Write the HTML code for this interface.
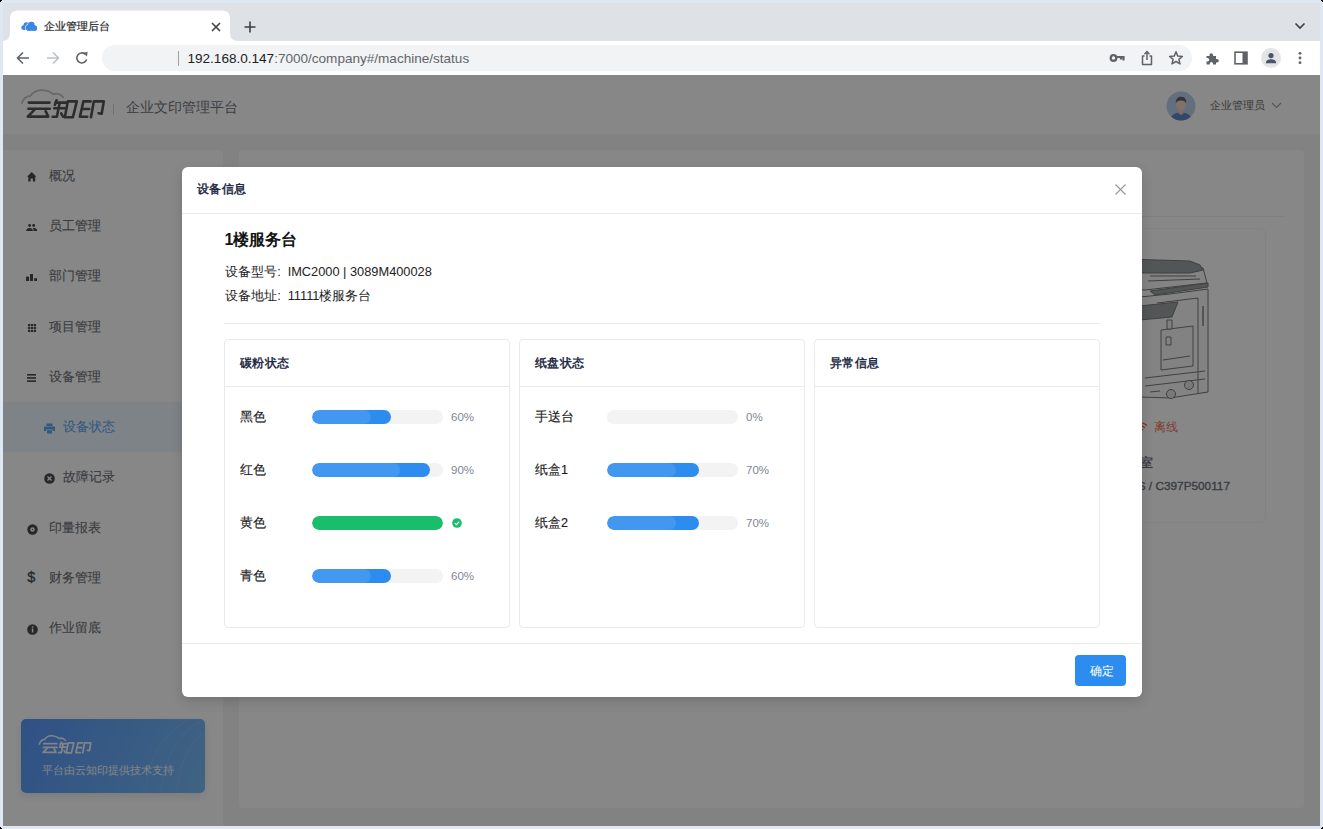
<!DOCTYPE html>
<html><head><meta charset="utf-8">
<style>
*{box-sizing:border-box;margin:0;padding:0}
html,body{width:1323px;height:829px;overflow:hidden}
body{background:#dde8f4;font-family:"Liberation Sans",sans-serif;position:relative}
.a{position:absolute}
.win{left:3px;top:3px;width:1317px;height:823px;background:#838383;overflow:hidden}
.tabbar{left:0;top:0;width:1317px;height:38px;background:#dee1e6}
.toolbar{left:0;top:38px;width:1317px;height:34px;background:#fff}
.omni{left:99px;top:4px;width:1090px;height:26px;background:#f1f3f4;border-radius:13px}
.t{white-space:nowrap;line-height:1}
/* page */
.page{left:0;top:72px;width:1317px;height:751px;background:#f2f2f2}
.hdr{left:0;top:0;width:1317px;height:59px;background:#fff}
.side{left:0;top:75px;width:220px;height:676px;background:#fff;border-top-right-radius:4px}
.main{left:236px;top:75px;width:1065px;height:658px;background:#fff;border-radius:4px}
.mask{left:0;top:0;width:1317px;height:751px;background:rgba(55,55,55,.6)}
.menu{left:0;width:220px;height:50.25px;color:#3a3f4a;font-size:12.6px}
.menu .tx{position:absolute;top:19px;-webkit-text-stroke:.12px currentColor}
.modal{left:179px;top:164px;width:960px;height:530px;background:#fff;border-radius:6px;box-shadow:0 4px 12px rgba(0,0,0,.15)}
.card{top:172px;width:286px;height:289px;border:1px solid #e8eaec;border-radius:4px;background:#fff}
.card .hd{position:absolute;left:0;top:0;width:284px;height:47px;border-bottom:1px solid #e8eaec}
.card .ht{position:absolute;left:15px;top:15.8px;font-size:13px;font-weight:normal;color:#17233d;-webkit-text-stroke:.45px #17233d;transform:scale(.955);transform-origin:0 0}
.row{position:absolute;left:0;width:284px;height:20px;margin-top:-1px}
.row .lb{position:absolute;left:15px;top:4px;font-size:12.6px;color:#1c1c1c;-webkit-text-stroke:.15px currentColor}
.trk{position:absolute;left:87px;top:3px;width:131px;height:14px;border-radius:7px;background:#f3f3f3;overflow:hidden}
.fill{position:absolute;left:0;top:0;height:14px;border-radius:7px;background:#2d8cf0}
.fill i{position:absolute;left:0;top:0;height:14px;border-radius:7px;background:rgba(255,255,255,.1)}
.pc{position:absolute;left:226px;top:4.5px;font-size:11.5px;color:#808695}
</style></head><body>
<div class="a win">
  <!-- tab bar -->
  <div class="a tabbar">
    <svg class="a" style="left:0;top:0" width="240" height="38" viewBox="0 0 240 38">
      <path d="M-1 38 Q7 38 7 30 L7 15.5 Q7 7.5 15 7.5 L219 7.5 Q227 7.5 227 15.5 L227 30 Q227 38 235 38 Z" fill="#fff"/>
    </svg>
    <svg class="a" style="left:15px;top:15px" width="22" height="16" viewBox="0 0 22 16">
      <g fill="#3b86e4"><circle cx="5.6" cy="9.6" r="2.3"/><circle cx="8.4" cy="7.2" r="2.9"/><rect x="5.5" y="8.5" width="5" height="3.4" rx="1"/></g>
      <g fill="#3b86e4" stroke="#fff" stroke-width="1.1"><circle cx="10.6" cy="9.7" r="3"/><circle cx="13.3" cy="7" r="3.3"/><circle cx="16.4" cy="10" r="2.7"/><rect x="9" y="9.4" width="9.8" height="3.3" rx="1.6"/></g>
      <g fill="#3b86e4"><circle cx="10.6" cy="9.7" r="3"/><circle cx="13.3" cy="7" r="3.3"/><circle cx="16.4" cy="10" r="2.7"/><rect x="9" y="9.4" width="9.8" height="3.3" rx="1.6"/></g>
    </svg>
    <div class="a t" style="left:41px;top:17.5px;font-size:11px;color:#2a2b2e;-webkit-text-stroke:.2px #2a2b2e">企业管理后台</div>
    <svg class="a" style="left:207px;top:18px" width="12" height="12" viewBox="0 0 12 12"><path d="M2 2 L10 10 M10 2 L2 10" stroke="#3c4043" stroke-width="1.6"/></svg>
    <svg class="a" style="left:240px;top:17px" width="14" height="14" viewBox="0 0 14 14"><path d="M7 1.5 V12.5 M1.5 7 H12.5" stroke="#3c4043" stroke-width="1.6"/></svg>
    <svg class="a" style="left:1291px;top:19px" width="12" height="8" viewBox="0 0 12 8"><path d="M1.5 1.5 L6 6 L10.5 1.5" stroke="#3c4043" stroke-width="1.6" fill="none"/></svg>
  </div>
  <!-- toolbar -->
  <div class="a toolbar">
    <svg class="a" style="left:12px;top:9px" width="16" height="16" viewBox="0 0 16 16"><path d="M14 8 H3 M8 2.5 L2.5 8 L8 13.5" stroke="#5f6368" stroke-width="1.6" fill="none"/></svg>
    <svg class="a" style="left:42px;top:9px" width="16" height="16" viewBox="0 0 16 16"><path d="M2 8 H13 M8 2.5 L13.5 8 L8 13.5" stroke="#bdc1c6" stroke-width="1.6" fill="none"/></svg>
    <svg class="a" style="left:71px;top:9px" width="16" height="16" viewBox="0 0 16 16"><path d="M12.6 9.5 A5 5 0 1 1 11.2 4.2" stroke="#5f6368" stroke-width="1.6" fill="none"/><path d="M9 3 L13.6 1.8 L13 6.6 Z" fill="#5f6368"/></svg>
    <div class="a omni">
      <div class="a" style="left:76px;top:6px;width:1px;height:15px;background:#9aa0a6"></div>
      <div class="a t" style="left:85.5px;top:7px;font-size:13.55px;color:#62666a"><span style="color:#202124">192.168.0.147</span>:7000/company#/machine/status</div>
      <!-- key -->
      <svg class="a" style="left:1007px;top:6px" width="16" height="14" viewBox="0 0 16 14"><circle cx="4.5" cy="7" r="2.8" stroke="#5f6368" stroke-width="2.2" fill="none"/><path d="M7 6 H14.5 V9.5 M12 6 V8.5" stroke="#5f6368" stroke-width="2.2" fill="none"/></svg>
      <!-- share -->
      <svg class="a" style="left:1038px;top:5px" width="14" height="16" viewBox="0 0 14 16"><path d="M4.5 6 H2.5 V14.5 H11.5 V6 H9.5" stroke="#5f6368" stroke-width="1.5" fill="none" stroke-linejoin="round"/><path d="M7 10 V1.8 M4.5 4.2 L7 1.5 L9.5 4.2" stroke="#5f6368" stroke-width="1.5" fill="none"/></svg>
      <!-- star -->
      <svg class="a" style="left:1066px;top:5px" width="16" height="16" viewBox="0 0 16 16"><path d="M8 1.8 L9.8 6.1 L14.4 6.4 L10.9 9.4 L12 13.9 L8 11.5 L4 13.9 L5.1 9.4 L1.6 6.4 L6.2 6.1 Z" stroke="#5f6368" stroke-width="1.5" fill="none" stroke-linejoin="round"/></svg>
    </div>
    <!-- puzzle -->
    <svg class="a" style="left:1202px;top:10px" width="15" height="15" viewBox="0 0 15 15"><path d="M1.5 5 H4.5 V4 A1.8 1.8 0 0 1 8.1 4 V5 H11 V8 H12 A1.8 1.8 0 0 1 12 11.6 H11 V13.5 H8 V12.5 A1.6 1.6 0 0 0 4.8 12.5 V13.5 H1.5 V10.5 H2.5 A1.7 1.7 0 0 0 2.5 7.1 H1.5 Z" fill="#5f6368"/></svg>
    <!-- side panel -->
    <svg class="a" style="left:1231px;top:10px" width="14" height="14" viewBox="0 0 14 14"><rect x="1" y="1.2" width="12" height="11.6" stroke="#5f6368" stroke-width="1.6" fill="none"/><rect x="8.5" y="1" width="4.5" height="12" fill="#5f6368"/></svg>
    <!-- profile -->
    <div class="a" style="left:1258px;top:7px;width:20px;height:20px;border-radius:10px;background:#e2e4e7"></div>
    <svg class="a" style="left:1258px;top:7px" width="20" height="20" viewBox="0 0 20 20"><circle cx="10" cy="7.6" r="2.6" fill="#4a5468"/><path d="M4.8 15.2 C5 12.2 7.4 11.3 10 11.3 C12.6 11.3 15 12.2 15.2 15.2 Z" fill="#4a5468"/></svg>
    <svg class="a" style="left:1294px;top:10px" width="6" height="14" viewBox="0 0 6 14"><circle cx="3" cy="2.3" r="1.4" fill="#5f6368"/><circle cx="3" cy="7" r="1.4" fill="#5f6368"/><circle cx="3" cy="11.7" r="1.4" fill="#5f6368"/></svg>
  </div>

  <!-- page -->
  <div class="a page">
    <div class="a hdr">
      <svg class="a" style="left:15px;top:9px" width="92" height="40" viewBox="0 0 92 40">
        <path d="M3.8 19 C5.5 14.5 8.5 12 12.5 11.8 C15 7.5 21 5.5 26.4 6.3 C30.5 6.8 33.5 8.5 35 10.2 C39 9 43 10.5 45.2 13.2" stroke="#b0b0b0" stroke-width="1.8" fill="none" stroke-linecap="round"/>
        <g stroke="#1e1e1e" stroke-width="2.6" fill="none" stroke-linecap="round" stroke-linejoin="round">
          <path d="M10.8 18.6 H31.5 M10.4 24.7 H31.8 M17.5 24.7 L9.8 32.6 H30.2 M27.6 27.2 L30.2 32.4"/>
          <path d="M38.6 16.3 L36.9 20.9 M37.4 18.6 H48 M36.2 24.3 H46.6 M41.7 18.6 L38.9 32.7 H34.6 M43.2 29.4 L45 32.6"/>
          <path d="M49.8 17.4 H58.8 L54.9 33.2 H46.8 Z"/>
          <path d="M72.6 17.4 H65.4 L61.9 32.7 H69.2 M63.6 25 H71.2"/>
          <path d="M73 33.2 L75.8 17.4 H85.8 L83.7 29.8 L80.5 29.2"/>
        </g>
      </svg>
      <div class="a" style="left:110px;top:29px;width:1px;height:11px;background:#c8c8c8"></div>
      <div class="a t" style="left:122.5px;top:26px;font-size:13.7px;color:#3f4654">企业文印管理平台</div>
      <svg class="a" style="left:1163px;top:16px" width="30" height="30" viewBox="0 0 30 30">
        <clipPath id="cc"><circle cx="15" cy="15" r="14.5"/></clipPath>
        <circle cx="15" cy="15" r="14.5" fill="#a9c3e8"/>
        <g clip-path="url(#cc)">
          <path d="M4 31 C4 24 9 21.5 15 21.5 C21 21.5 26 24 26 31 Z" fill="#2f5fb3"/>
          <path d="M12.5 18 H17.5 V22.5 L15 24 L12.5 22.5 Z" fill="#e8b9a0"/>
          <ellipse cx="15" cy="13.5" rx="5" ry="6" fill="#f0c7ac"/>
          <path d="M9.8 12.5 C9.5 7 13 5.5 15.5 5.8 C19 6 20.8 8.5 20.2 12.5 C19.5 10.5 18 9.5 15 9.5 C12 9.5 10.5 10.5 9.8 12.5 Z" fill="#2b2f4a"/>
        </g>
      </svg>
      <div class="a t" style="left:1207px;top:24.5px;font-size:11.2px;color:#333">企业管理员</div>
      <svg class="a" style="left:1268px;top:27px" width="11" height="7" viewBox="0 0 11 7"><path d="M1 1 L5.5 5.5 L10 1" stroke="#808695" stroke-width="1.1" fill="none"/></svg>
    </div>

    <div class="a side">
      <div class="a menu" style="top:0.9px"><svg class="a" style="left:23.8px;top:21.3px" width="9.5" height="9.6" viewBox="0 0 9.5 9.6"><path d="M4.75 0 L9.5 4.8 H8.2 V9.6 H5.9 V6.6 H3.6 V9.6 H1.3 V4.8 H0 Z" fill="#0d0f14"/></svg><span class="tx t" style="left:46px">概况</span></div>
      <div class="a menu" style="top:51.15px"><svg class="a" style="left:22.9px;top:22.5px" width="11.3" height="7.4" viewBox="0 0 11.3 7.4"><g fill="#0d0f14"><circle cx="3.6" cy="1.5" r="1.45"/><circle cx="7.7" cy="1.5" r="1.45"/><path d="M0 7.4 C0 5.2 1.6 4.1 3.6 4.1 C5.6 4.1 7 5.2 7 7.4 Z"/><path d="M7.6 7.4 C7.6 5.9 7.3 5 6.9 4.5 C7.2 4.2 7.6 4.1 7.9 4.1 C9.8 4.1 11.3 5.2 11.3 7.4 Z"/></g></svg><span class="tx t" style="left:46px">员工管理</span></div>
      <div class="a menu" style="top:101.4px"><svg class="a" style="left:22.8px;top:23px" width="11.3" height="7.1" viewBox="0 0 11.3 7.1"><g fill="#0d0f14"><rect x="0" y="2.6" width="3" height="4.5"/><rect x="4" y="0" width="3" height="7.1"/><rect x="8.2" y="4.2" width="3.1" height="2.9"/></g></svg><span class="tx t" style="left:46px">部门管理</span></div>
      <div class="a menu" style="top:151.65px"><svg class="a" style="left:24.7px;top:21.9px" width="8.3" height="8.3" viewBox="0 0 8.3 8.3"><g fill="#0d0f14"><rect x="0" y="0" width="2.3" height="2.3"/><rect x="3" y="0" width="2.3" height="2.3"/><rect x="6" y="0" width="2.3" height="2.3"/><rect x="0" y="3" width="2.3" height="2.3"/><rect x="3" y="3" width="2.3" height="2.3"/><rect x="6" y="3" width="2.3" height="2.3"/><rect x="0" y="6" width="2.3" height="2.3"/><rect x="3" y="6" width="2.3" height="2.3"/><rect x="6" y="6" width="2.3" height="2.3"/></g></svg><span class="tx t" style="left:46px">项目管理</span></div>
      <div class="a menu" style="top:201.9px"><svg class="a" style="left:23.6px;top:22.5px" width="9.9" height="7.9" viewBox="0 0 9.9 7.9"><g fill="#0d0f14"><rect x="0" y="0" width="9.9" height="1.6"/><rect x="0" y="3.15" width="9.9" height="1.6"/><rect x="0" y="6.3" width="9.9" height="1.6"/></g></svg><span class="tx t" style="left:46px">设备管理</span></div>
      <div class="a menu" style="top:252.15px;background:#e8f4ff;color:#2d8cf0"><svg class="a" style="left:40.5px;top:21px" width="11" height="11" viewBox="0 0 11 11"><path d="M2.5 0.5 H8.5 V3 H2.5 Z M0.5 3.5 H10.5 A0.5 0.5 0 0 1 11 4 V8 H8.8 V6.5 H2.2 V8 H0 V4 A0.5 0.5 0 0 1 .5 3.5 Z M3 7.2 H8 V10.5 H3 Z" fill="#2d8cf0"/></svg><span class="tx t" style="left:60px">设备状态</span></div>
      <div class="a menu" style="top:302.4px"><svg class="a" style="left:40.5px;top:21px" width="11" height="11" viewBox="0 0 11 11"><circle cx="5.5" cy="5.5" r="5.3" fill="#0d0f14"/><path d="M3.5 3.5 L7.5 7.5 M7.5 3.5 L3.5 7.5" stroke="#fff" stroke-width="1.4"/></svg><span class="tx t" style="left:60px">故障记录</span></div>
      <div class="a menu" style="top:352.65px"><svg class="a" style="left:23.5px;top:21px" width="11" height="11" viewBox="0 0 11 11"><circle cx="5.5" cy="5.5" r="5.2" fill="#0d0f14"/><circle cx="5.5" cy="5.5" r="2.2" fill="#fff"/><circle cx="5.5" cy="5.5" r=".7" fill="#0d0f14"/></svg><span class="tx t" style="left:46px">印量报表</span></div>
      <div class="a menu" style="top:402.9px"><div class="a t" style="left:24.2px;top:17.6px;font-size:14.5px;color:#0d0f14;-webkit-text-stroke:.35px #0d0f14">$</div><span class="tx t" style="left:46px">财务管理</span></div>
      <div class="a menu" style="top:453.15px"><svg class="a" style="left:23.5px;top:20.5px" width="11" height="11" viewBox="0 0 11 11"><circle cx="5.5" cy="5.5" r="5.3" fill="#0d0f14"/><rect x="4.8" y="4.5" width="1.5" height="4" fill="#fff"/><rect x="4.8" y="2.3" width="1.5" height="1.4" fill="#fff"/></svg><span class="tx t" style="left:46px">作业留底</span></div>
      <div class="a" style="left:18px;top:569px;width:184px;height:74px;border-radius:5px;background:linear-gradient(115deg,#2478fa,#4da6f5);overflow:hidden;box-shadow:0 3px 8px rgba(0,0,0,.12)">
        <svg class="a" style="left:110px;top:0" width="74" height="74" viewBox="0 0 74 74"><path d="M30 80 C30 40 50 10 74 0 M46 80 C46 45 60 20 80 10 M14 80 C14 35 40 5 70 -5" stroke="#fff" stroke-opacity=".12" fill="none"/></svg>
        <svg class="a" style="left:15.6px;top:12.7px" width="57.7" height="25.1" viewBox="0 0 92 40">
        <path d="M3.8 19 C5.5 14.5 8.5 12 12.5 11.8 C15 7.5 21 5.5 26.4 6.3 C30.5 6.8 33.5 8.5 35 10.2 C39 9 43 10.5 45.2 13.2" stroke="#e6eefb" stroke-width="2.6" fill="none" stroke-linecap="round"/>
        <g stroke="#f2f6fd" stroke-width="2.8" fill="none" stroke-linecap="round" stroke-linejoin="round">
          <path d="M10.8 18.6 H31.5 M10.4 24.7 H31.8 M17.5 24.7 L9.8 32.6 H30.2 M27.6 27.2 L30.2 32.4"/>
          <path d="M38.6 16.3 L36.9 20.9 M37.4 18.6 H48 M36.2 24.3 H46.6 M41.7 18.6 L38.9 32.7 H34.6 M43.2 29.4 L45 32.6"/>
          <path d="M49.8 17.4 H58.8 L54.9 33.2 H46.8 Z"/>
          <path d="M72.6 17.4 H65.4 L61.9 32.7 H69.2 M63.6 25 H71.2"/>
          <path d="M73 33.2 L75.8 17.4 H85.8 L83.7 29.8 L80.5 29.2"/>
        </g>
      </svg>
        <div class="a t" style="left:21px;top:46px;font-size:10.9px;color:#f4f8ff">平台由云知印提供技术支持</div>
      </div>
    </div>

    <div class="a main">
      <div class="a" style="left:18px;top:66px;width:1028px;height:1px;background:#e8eaec"></div>
      <div class="a" style="left:800px;top:78px;width:227px;height:295px;border:1px solid #f1f2f4;border-radius:6px"></div>
      <svg class="a" style="left:861px;top:105px" width="115" height="150" viewBox="1100 255 115 150">
        <g stroke="#4e4e4e" stroke-width="1" stroke-linejoin="round">
          <path d="M1110 300 L1170 294 L1208 289 L1208 392 L1170 398 L1110 396 Z" fill="#f6f6f6"/>
          <path d="M1157 303 L1198 298 L1198 394" fill="none"/>
          <path d="M1161 330 L1193 326 L1193 366 L1161 370 Z" fill="#f2f2f2"/>
          <path d="M1167 320 H1172 V329 H1167 Z" fill="#eee"/>
          <path d="M1145 378 L1205 371 M1145 386 L1205 379 M1150 392 L1160 391" fill="none"/><path d="M1163 360 L1190 356" fill="none"/><path d="M1166 337 H1171 V345 H1166 Z" fill="none"/>
          <path d="M1120 270 L1203 268 L1207 283 L1145 290 L1120 288 Z" fill="#f4f4f4"/>
          <path d="M1125 259 L1190 261 L1200 265 L1203 270 L1190 273 L1130 273 Z" fill="#7b8488"/>
          <path d="M1150 291 L1208 283 L1208 287 L1155 295 Z" fill="#7b8488"/>
          <path d="M1120 308 L1178 302 L1172 317 L1118 322 Z" fill="#7b8488"/>
          <path d="M1150 276 H1196 M1148 281 L1200 279" fill="none"/>
          <path d="M1203 306 V326" stroke-width="1.4" fill="none"/>
          <circle cx="1171" cy="394" r="4.5" fill="#ddd"/>
          <circle cx="1189" cy="385" r="4.5" fill="#ddd"/>
        </g>
      </svg>
      <svg class="a" style="left:895px;top:271px" width="14" height="12" viewBox="0 0 14 12"><path d="M1 4.5 C4.5 1 9.5 1 13 4.5 M3 6.8 C5.5 4.5 8.5 4.5 11 6.8 M5 9 C6.2 8 7.8 8 9 9" stroke="#ed4014" stroke-width="1.5" fill="none"/></svg>
      <div class="a t" style="left:915px;top:272px;font-size:11.8px;color:#ed4014">离线</div>
      <div class="a t" style="left:875px;top:306.5px;font-size:12.6px;color:#2a3040;-webkit-text-stroke:.3px #2a3040">会议室</div>
      <div class="a t" style="right:74px;top:330.6px;font-size:11.8px;font-weight:normal;color:#3d4452;-webkit-text-stroke:.35px #3d4452">IMC2000S / C397P500117</div>
    </div>

    <div class="a mask"></div>
  </div>

  <!-- modal -->
  <div class="a modal">
    <div class="a t" style="left:14.5px;top:15.3px;font-size:13px;font-weight:normal;color:#17233d;-webkit-text-stroke:.45px #17233d;transform:scale(.955);transform-origin:0 0">设备信息</div>
    <svg class="a" style="left:932px;top:16px" width="13" height="13" viewBox="0 0 13 13"><path d="M1.5 1.5 L11.5 11.5 M11.5 1.5 L1.5 11.5" stroke="#999" stroke-width="1.1"/></svg>
    <div class="a" style="left:0;top:45.5px;width:960px;height:1px;background:#e8eaec"></div>
    <div class="a t" style="left:42.5px;top:65px;font-size:16px;font-weight:bold;color:#141414">1楼服务台</div>
    <div class="a t" style="left:42.5px;top:99px;font-size:12.8px;color:#222">设备型号<span style="margin:0 6.9px 0 0.7px">:</span>IMC2000 | 3089M400028</div>
    <div class="a t" style="left:42.5px;top:123px;font-size:12.8px;color:#222">设备地址<span style="margin:0 6.9px 0 0.7px">:</span>11111楼服务台</div>
    <div class="a" style="left:42px;top:156px;width:876px;height:1px;background:#e8eaec"></div>

    <div class="a card" style="left:42px">
      <div class="hd"><span class="ht t">碳粉状态</span></div>
      <div class="row" style="top:68px"><span class="lb t">黑色</span><div class="trk"><div class="fill" style="width:60%"><i style="width:75%"></i></div></div><span class="pc t">60%</span></div>
      <div class="row" style="top:121px"><span class="lb t">红色</span><div class="trk"><div class="fill" style="width:90%"><i style="width:75%"></i></div></div><span class="pc t">90%</span></div>
      <div class="row" style="top:174px"><span class="lb t">黄色</span><div class="trk"><div class="fill" style="width:100%;background:#19be6b"></div></div>
        <svg class="a" style="left:227px;top:5px" width="10" height="10" viewBox="0 0 10 10"><circle cx="5" cy="5" r="4.8" fill="#19be6b"/><path d="M2.8 5.2 L4.4 6.7 L7.3 3.6" stroke="#fff" stroke-width="1.1" fill="none"/></svg></div>
      <div class="row" style="top:227px"><span class="lb t">青色</span><div class="trk"><div class="fill" style="width:60%"><i style="width:75%"></i></div></div><span class="pc t">60%</span></div>
    </div>
    <div class="a card" style="left:337px">
      <div class="hd"><span class="ht t">纸盘状态</span></div>
      <div class="row" style="top:68px"><span class="lb t">手送台</span><div class="trk"></div><span class="pc t">0%</span></div>
      <div class="row" style="top:121px"><span class="lb t">纸盒1</span><div class="trk"><div class="fill" style="width:70%"><i style="width:75%"></i></div></div><span class="pc t">70%</span></div>
      <div class="row" style="top:174px"><span class="lb t">纸盒2</span><div class="trk"><div class="fill" style="width:70%"><i style="width:75%"></i></div></div><span class="pc t">70%</span></div>
    </div>
    <div class="a card" style="left:632px">
      <div class="hd"><span class="ht t">异常信息</span></div>
    </div>

    <div class="a" style="left:0;top:476px;width:960px;height:1px;background:#e8eaec"></div>
    <div class="a" style="left:892.5px;top:488px;width:51.5px;height:30.5px;border-radius:4px;background:#2d8cf0"></div>
    <div class="a t" style="left:907.5px;top:498.5px;font-size:11.5px;color:#fff">确定</div>
  </div>
</div>
<div class="a" style="left:0;top:0;width:2px;height:1px;background:#000"></div><div class="a" style="left:0;top:0;width:1px;height:2px;background:#000"></div>
<div class="a" style="right:0;top:0;width:2px;height:1px;background:#000"></div><div class="a" style="right:0;top:0;width:1px;height:2px;background:#000"></div>
<div class="a" style="left:0;bottom:0;width:2px;height:1px;background:#000"></div><div class="a" style="left:0;bottom:0;width:1px;height:2px;background:#000"></div>
<div class="a" style="right:0;bottom:0;width:2px;height:1px;background:#000"></div><div class="a" style="right:0;bottom:0;width:1px;height:2px;background:#000"></div>
</body></html>
